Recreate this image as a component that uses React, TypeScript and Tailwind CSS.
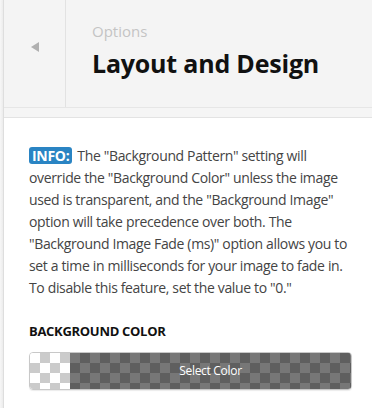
import React from "react";

const font = { fontFamily: '"Open Sans", "Noto Sans", sans-serif' };

export default function App() {
  return (
    <div className="w-[372px] h-[408px] overflow-hidden bg-white relative" style={font}>
      <div className="absolute left-0 top-0 bottom-0 w-[4px] bg-gradient-to-r from-[#f7f7f7] to-[#ececec] border-r border-[#dedede]" />
      <div className="ml-[4px] flex flex-col">
        <div className="flex h-[108px] bg-[#f4f4f4] border-b border-[#e6e6e6]">
          <div className="w-[62px] border-r border-[#e2e2e2] flex items-center justify-center pb-[14px]">
            <svg width="8" height="10" viewBox="0 0 8 10"><polygon points="0,5 8,0 8,10" fill="#b0b0b0" /></svg>
          </div>
          <div className="flex flex-col pl-[26px] pt-[21px]">
            <div className="text-[15px] leading-[20px] text-[#c4c4c4]">Options</div>
            <div className="text-[25px] leading-[32px] font-bold text-[#111] mt-[6px] tracking-[-0.2px]">Layout and Design</div>
          </div>
        </div>
        <div className="h-[10px] bg-[#f5f5f5] border-b border-[#e3e3e3]" />
        <div className="px-[25px] pt-[27px]">
          <p className="text-[14px] leading-[22px] text-[#444] tracking-[-0.35px]">
            <span className="inline-block bg-[#2a84c3] text-white font-bold rounded-[3px] px-[3px] leading-[17px] mr-[5px] tracking-[-0.3px]">INFO:</span>
            The "Background Pattern" setting will override the "Background Color" unless the image used is transparent, and the "Background Image" option will take precedence over both. The "Background Image Fade (ms)" option allows you to set a time in milliseconds for your image to fade in. To disable this feature, set the value to "0."
          </p>
          <div className="mt-[23px] text-[13px] font-bold text-[#111] tracking-[-0.3px] leading-[18px]">BACKGROUND COLOR</div>
          <div className="mt-[12px] h-[38px] w-[323px] rounded-[4px] border border-[#c8c8c8] overflow-hidden flex shadow-[0_1px_1px_rgba(0,0,0,0.08)]">
            <div
              className="w-[40px] h-full"
              style={{
                backgroundColor: "#ffffff",
                backgroundImage:
                  "linear-gradient(45deg, #cbcbcb 25%, transparent 25%, transparent 75%, #cbcbcb 75%), linear-gradient(45deg, #cbcbcb 25%, transparent 25%, transparent 75%, #cbcbcb 75%)",
                backgroundSize: "20px 20px",
                backgroundPosition: "0 0, 10px 10px",
              }}
            />
            <div
              className="flex-1 h-full flex items-center justify-center text-white text-[12px] tracking-[-0.3px]"
              style={{
                backgroundColor: "#777777",
                backgroundImage:
                  "linear-gradient(45deg, #5f5f5f 25%, transparent 25%, transparent 75%, #5f5f5f 75%), linear-gradient(45deg, #5f5f5f 25%, transparent 25%, transparent 75%, #5f5f5f 75%)",
                backgroundSize: "20px 20px",
                backgroundPosition: "0 0, 10px 10px",
              }}
            >
              Select Color
            </div>
          </div>
        </div>
      </div>
    </div>
  );
}
